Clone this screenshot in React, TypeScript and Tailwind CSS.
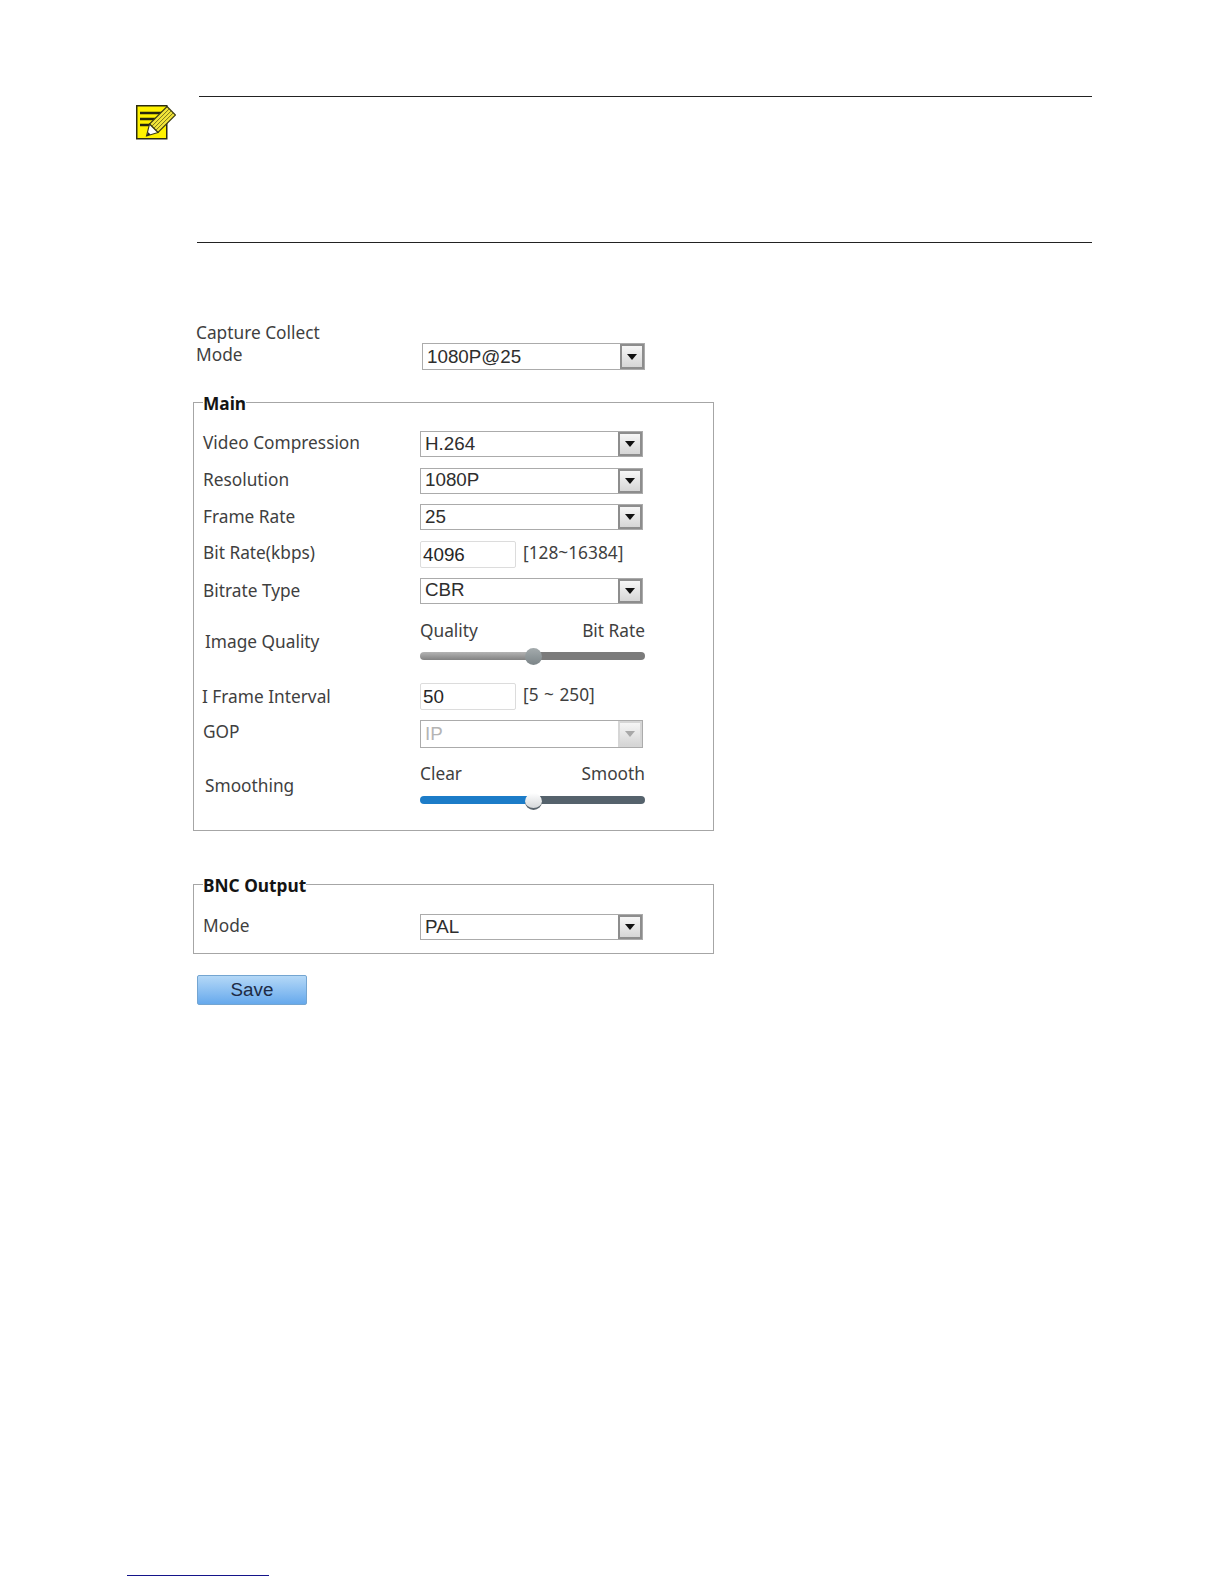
import React from "react";

const labelFont = "font-['Noto_Sans',sans-serif] text-[17.3px] leading-[22px] text-[#3f3f3f]";
const valueFont = "font-['Liberation_Sans',Arial,sans-serif] text-[18.8px] leading-none";

function NoteIcon() {
  return (
    <svg width="40" height="35" viewBox="0 0 40 35" fill="none">
      <rect x="0.75" y="0.75" width="30" height="33" fill="#fff200" stroke="#2b2b10" strokeWidth="1.5" />
      <path d="M4 8h22M4 14h17M4 20h11" stroke="#26260f" strokeWidth="2.6" />
      <path d="M31 1.5 39.5 10 22 27.5 13.5 19Z" fill="#f2e53a" stroke="#3a3a14" strokeWidth="1.2" />
      <path d="M15.8 21.3 33.3 3.8M17.8 23.3 35.3 5.8M19.8 25.3 37.3 7.8" stroke="#6b6616" strokeWidth="0.9" />
      <path d="M13.5 19 22 27.5 10.5 31Z" fill="#ffffff" stroke="#3a3a14" strokeWidth="1.1" />
      <path d="M12.2 27.2 14.6 29.5 10.5 31Z" fill="#222" />
    </svg>
  );
}

function Select({ value, disabled = false, h = "h-[26px]", textClass = "" }: { value: string; disabled?: boolean; h?: string; textClass?: string }) {
  return (
    <div className={`w-[223px] ${h} flex items-stretch border border-[#ababab] bg-white`}>
      <div className={`flex-1 flex items-center pl-[4px] ${textClass} ${valueFont} ${disabled ? "text-[#b4b4b4]" : "text-[#2e2e2e]"}`}>{value}</div>
      <div
        className={`w-[24px] flex items-center justify-center border-2 bg-gradient-to-b from-[#f6f6f6] to-[#d6d6d6] ${
          disabled ? "border-[#d6d6d6]" : "border-[#8d8d8d]"
        }`}
      >
        <svg width="10" height="6" viewBox="0 0 10 6">
          <path d="M0 0h10L5 6Z" fill={disabled ? "#a8a8a8" : "#111"} />
        </svg>
      </div>
    </div>
  );
}

function Field({ value, hint }: { value: string; hint: string }) {
  return (
    <div className="flex items-center">
      <div className={`w-[96px] h-[27px] border border-[#dcdcdc] rounded-[2px] flex items-center pl-[2px] pt-[2px] text-[#262626] ${valueFont}`}>{value}</div>
      <span className={`ml-[7px] -mt-[3px] ${labelFont} text-[16.6px] [word-spacing:1px]`}>{hint}</span>
    </div>
  );
}

function Slider({ left, right, from, to, knob, gap, knobTop }: { left: string; right: string; from: string; to: string; knob: string; gap: string; knobTop: string }) {
  return (
    <div className="w-[225px]">
      <div className={`flex justify-between pt-px ${labelFont}`}>
        <span>{left}</span>
        <span>{right}</span>
      </div>
      <div className={`relative ${gap} h-[8px] flex rounded-full`}>
        <div className={`w-1/2 rounded-l-full ${from}`} />
        <div className={`w-1/2 rounded-r-full ${to}`} />
        <div className={`absolute left-[105px] ${knobTop} w-[17px] h-[17px] rounded-full ${knob}`} />
      </div>
    </div>
  );
}

function Row({ label, h, children, labelClass = "pt-px" }: { label: string; h: string; children: React.ReactNode; labelClass?: string }) {
  return (
    <div className={`flex ${h}`}>
      <div className={`w-[217px] ${labelFont} ${labelClass}`}>{label}</div>
      <div>{children}</div>
    </div>
  );
}

function Group({ title, h, children }: { title: string; h: string; children: React.ReactNode }) {
  return (
    <fieldset className={`ml-[193px] w-[521px] ${h} border border-[#a6a6a6] px-[9px]`}>
      <legend className="h-[22px] pt-[2px] px-0 pb-0 font-['Noto_Sans',sans-serif] font-bold text-[17.3px] leading-[22px] text-[#141414]">{title}</legend>
      {children}
    </fieldset>
  );
}

export default function App() {
  return (
    <div className="w-[1224px] h-[1584px] bg-white flex flex-col overflow-hidden">
      <div className="mt-[96px] ml-[199px] w-[893px] h-px bg-[#222]" />
      <div className="h-[145px] pl-[136px] pt-[8px]">
        <NoteIcon />
      </div>
      <div className="ml-[197px] w-[895px] h-px bg-[#222]" />

      <div className="mt-[79px] ml-[196px] flex h-[48px]">
        <div className={`w-[226px] ${labelFont}`}>
          Capture Collect
          <br />
          Mode
        </div>
        <div className="mt-[21px]">
          <Select value="1080P@25" h="h-[27px]" textClass="pt-[2px]" />
        </div>
      </div>

      <div className="mt-[21px]">
        <Group title="Main" h="h-[440px]">
          <div className="pt-[18px]">
            <Row label="Video Compression" h="h-[36.5px]"><Select value="H.264" /></Row>
            <Row label="Resolution" h="h-[36.5px]"><Select value="1080P" /></Row>
            <Row label="Frame Rate" h="h-[36.5px]" labelClass="pt-[2px]"><Select value="25" /></Row>
            <Row label="Bit Rate(kbps)" h="h-[37px]"><Field value="4096" hint="[128~16384]" /></Row>
            <Row label="Bitrate Type" h="h-[36.5px]" labelClass="pt-[2px]"><Select value="CBR" /></Row>
            <Row label="Image Quality" h="h-[69px]" labelClass="pl-[2px] pt-[17px]">
              <div className="pt-[5px]">
                <Slider
                  left="Quality"
                  right="Bit Rate"
                  gap="mt-[10px]"
                  knobTop="-top-[4px]"
                  from="bg-gradient-to-b from-[#b4b4b4] to-[#828282]"
                  to="bg-[#7b7b7b]"
                  knob="bg-gradient-to-b from-[#a4abad] to-[#7c8588]"
                />
              </div>
            </Row>
            <Row label="I Frame Interval" h="h-[37px]" labelClass="-ml-px mr-px pt-[3px]"><Field value="50" hint="[5 ~ 250]" /></Row>
            <Row label="GOP" h="h-[37px]"><Select value="IP" disabled h="h-[28px]" /></Row>
            <Row label="Smoothing" h="h-[60px]" labelClass="pl-[2px] pt-[18px]">
              <div className="pt-[5px]">
                <Slider
                  left="Clear"
                  right="Smooth"
                  gap="mt-[11px]"
                  knobTop="-top-[3px]"
                  from="bg-[#1c7cc8]"
                  to="bg-[#55626c]"
                  knob="bg-gradient-to-b from-[#ffffff] to-[#d5d8da] border-b-2 border-[#59646c]"
                />
              </div>
            </Row>
          </div>
        </Group>
      </div>

      <div className="mt-[42px]">
        <Group title="BNC Output" h="h-[81px]">
          <div className="pt-[19px]">
            <Row label="Mode" h="h-[26px]"><Select value="PAL" /></Row>
          </div>
        </Group>
      </div>

      <button className="mt-[21px] ml-[197px] w-[110px] h-[30px] rounded-[2px] border border-[#74a5d1] bg-gradient-to-b from-[#b4d8f7] to-[#66a9ec] font-['Liberation_Sans',Arial,sans-serif] text-[18.8px] leading-none text-[#1d2b45]">
        Save
      </button>

      <div className="mt-auto mb-[8px] ml-[127px] w-[142px] h-[1.5px] bg-[#14148a]" />
    </div>
  );
}
